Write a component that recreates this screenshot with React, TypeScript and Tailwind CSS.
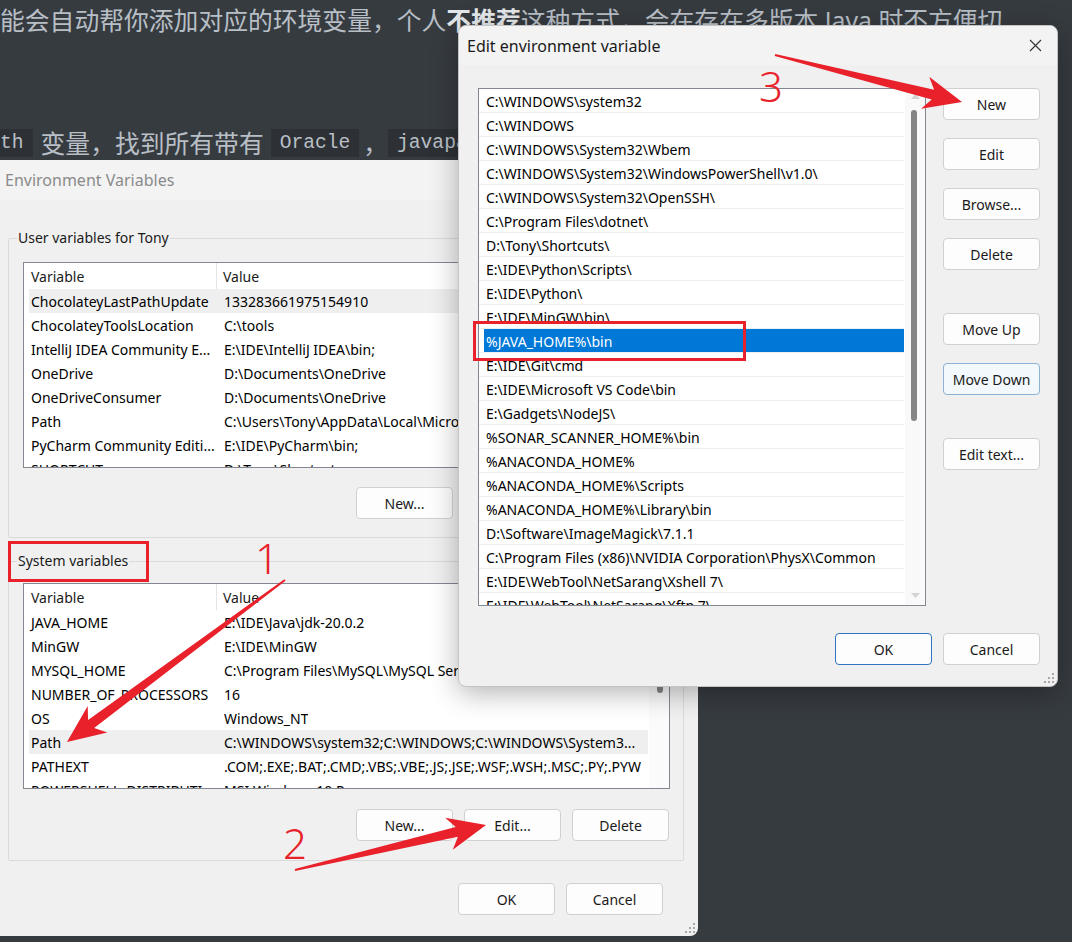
import React from 'react';

type P = [number, number];

// tapered annotation arrow, tail -> tip
function arrowPoints(tail: P, tip: P): string {
  const dx = tip[0] - tail[0];
  const dy = tip[1] - tail[1];
  const len = Math.hypot(dx, dy);
  const ux = dx / len;
  const uy = dy / len;
  const nx = -uy;
  const ny = ux;
  const at = (back: number, side: number): P => [tip[0] - ux * back + nx * side, tip[1] - uy * back + ny * side];
  const pts: P[] = [at(len, 1), at(30, 5), at(38, 16.5), tip, at(38, -16.5), at(30, -5), at(len, -1)];
  return pts.map((p) => `${p[0].toFixed(1)},${p[1].toFixed(1)}`).join(' ');
}

const userVars = [
  ['ChocolateyLastPathUpdate', '133283661975154910'],
  ['ChocolateyToolsLocation', 'C:\\tools'],
  ['IntelliJ IDEA Community E...', 'E:\\IDE\\IntelliJ IDEA\\bin;'],
  ['OneDrive', 'D:\\Documents\\OneDrive'],
  ['OneDriveConsumer', 'D:\\Documents\\OneDrive'],
  ['Path', 'C:\\Users\\Tony\\AppData\\Local\\Microsoft\\WindowsApps;'],
  ['PyCharm Community Editi...', 'E:\\IDE\\PyCharm\\bin;'],
  ['SHORTCUT', 'D:\\Tony\\Shortcuts'],
];

const systemVars = [
  ['JAVA_HOME', 'E:\\IDE\\Java\\jdk-20.0.2'],
  ['MinGW', 'E:\\IDE\\MinGW'],
  ['MYSQL_HOME', 'C:\\Program Files\\MySQL\\MySQL Server 8.0'],
  ['NUMBER_OF_PROCESSORS', '16'],
  ['OS', 'Windows_NT'],
  ['Path', 'C:\\WINDOWS\\system32;C:\\WINDOWS;C:\\WINDOWS\\System3...'],
  ['PATHEXT', '.COM;.EXE;.BAT;.CMD;.VBS;.VBE;.JS;.JSE;.WSF;.WSH;.MSC;.PY;.PYW'],
  ['POWERSHELL_DISTRIBUTI...', 'MSI:Windows 10 Pro'],
];

const pathEntries = [
  'C:\\WINDOWS\\system32',
  'C:\\WINDOWS',
  'C:\\WINDOWS\\System32\\Wbem',
  'C:\\WINDOWS\\System32\\WindowsPowerShell\\v1.0\\',
  'C:\\WINDOWS\\System32\\OpenSSH\\',
  'C:\\Program Files\\dotnet\\',
  'D:\\Tony\\Shortcuts\\',
  'E:\\IDE\\Python\\Scripts\\',
  'E:\\IDE\\Python\\',
  'E:\\IDE\\MinGW\\bin\\',
  '%JAVA_HOME%\\bin',
  'E:\\IDE\\Git\\cmd',
  'E:\\IDE\\Microsoft VS Code\\bin',
  'E:\\Gadgets\\NodeJS\\',
  '%SONAR_SCANNER_HOME%\\bin',
  '%ANACONDA_HOME%',
  '%ANACONDA_HOME%\\Scripts',
  '%ANACONDA_HOME%\\Library\\bin',
  'D:\\Software\\ImageMagick\\7.1.1',
  'C:\\Program Files (x86)\\NVIDIA Corporation\\PhysX\\Common',
  'E:\\IDE\\WebTool\\NetSarang\\Xshell 7\\',
  'E:\\IDE\\WebTool\\NetSarang\\Xftp 7\\',
];

const Btn: React.FC<{ label: string; variant?: 'default' | 'focus' | 'primary' }> = ({ label, variant = 'default' }) => {
  const look =
    variant === 'focus'
      ? 'bg-[#f3f8fc] border-[#8cb2d6]'
      : variant === 'primary'
        ? 'bg-[#fdfdfd] border-[#2f74c0]'
        : 'bg-[#fdfdfd] border-[#d0d0d0]';
  return (
    <div className={`h-[32px] w-[97px] shrink-0 rounded-[4px] border ${look} flex items-center justify-center text-[14px] text-[#1a1a1a]`}>
      {label}
    </div>
  );
};

const Grip = () => (
  <svg width="10" height="10" viewBox="0 0 10 10" className="absolute right-[3px] bottom-[3px]">
    {[[8, 0], [8, 4], [4, 4], [8, 8], [4, 8], [0, 8]].map(([x, y], i) => (
      <rect key={i} x={x} y={y} width="2" height="2" fill="#a8a8a8" />
    ))}
  </svg>
);

const VarTable: React.FC<{ rows: string[][]; selected: number; thumbTop: number }> = ({ rows, selected, thumbTop }) => (
  <div className="relative h-[206px] border border-[#828790] bg-white overflow-hidden">
    <div className="flex h-[26px] items-center text-[14px] text-[#1a1a1a]">
      <div className="w-[193px] h-full pl-[7px] flex items-center border-r border-[#e5e5e5]">Variable</div>
      <div className="pl-[6px]">Value</div>
    </div>
    {rows.map(([k, v], i) => (
      <div
        key={k}
        className={`ml-[5px] mr-[21px] flex h-[24px] items-center text-[14px] text-black whitespace-nowrap ${i === selected ? 'bg-[#efefef]' : ''}`}
      >
        <div className="w-[195px] shrink-0 pl-[2px] overflow-hidden">{k}</div>
        <div className="overflow-hidden">{v}</div>
      </div>
    ))}
    <div className="absolute right-0 top-0 bottom-0 w-[20px] bg-[#fbfbfb]">
      <div className="absolute left-[8px] w-[6px] h-[95px] rounded-[3px] bg-[#858585]" style={{ top: thumbTop }} />
    </div>
  </div>
);

const EnvDialog = () => (
  <div className="absolute left-0 top-[160px] w-[698px] h-[776px] bg-[#f0f0f0] rounded-br-[8px] font-['Noto_Sans',sans-serif]">
    <div className="h-[40px] bg-[#f3f3f3] pl-[5px] flex items-center text-[16px] text-[#8a8a8a]">Environment Variables</div>
    <div className="pl-[8px] pr-[14px]">
      <fieldset className="mt-[28px] border border-[#dadada] rounded-[2px] pl-[14px] pr-[13px] pb-[18px]">
        <legend className="-ml-[6px] px-[1px] text-[14px] leading-[20px] text-[#1a1a1a]">User variables for Tony</legend>
        <div className="mt-[14px]">
          <VarTable rows={userVars} selected={0} thumbTop={2} />
        </div>
        <div className="mt-[19px] flex justify-end gap-[11px] pr-[1px]">
          <Btn label="New..." />
          <Btn label="Edit..." />
          <Btn label="Delete" />
        </div>
      </fieldset>
      <fieldset className="mt-[13px] border border-[#dadada] rounded-[2px] pl-[14px] pr-[13px] pb-[19px]">
        <legend className="-ml-[6px] px-[1px] text-[14px] leading-[20px] text-[#1a1a1a]">System variables</legend>
        <div className="mt-[12px]">
          <VarTable rows={systemVars} selected={5} thumbTop={14} />
        </div>
        <div className="mt-[20px] flex justify-end gap-[11px] pr-[1px]">
          <Btn label="New..." />
          <Btn label="Edit..." />
          <Btn label="Delete" />
        </div>
      </fieldset>
      <div className="mt-[22px] flex justify-end gap-[11px] pr-[21px]">
        <Btn label="OK" />
        <Btn label="Cancel" />
      </div>
    </div>
    <Grip />
  </div>
);

const EditDialog = () => (
  <div className="absolute left-[458px] top-[25px] w-[600px] h-[662px] rounded-[8px] bg-[#f0f0f0] border border-[#c4c4c4] shadow-[0_6px_28px_rgba(0,0,0,0.3)] font-['Noto_Sans',sans-serif]">
    <div className="h-[39px] rounded-t-[8px] bg-[#f3f3f3] flex items-center justify-between pl-[8px] pr-[15px] text-[16px] text-[#1a1a1a]">
      <span>Edit environment variable</span>
      <svg width="13" height="13" viewBox="0 0 13 13">
        <path d="M1 1 L12 12 M12 1 L1 12" stroke="#333" strokeWidth="1.1" />
      </svg>
    </div>
    <div className="mt-[23px] pl-[19px] pr-[17px] flex gap-[17px]">
      <div className="relative w-[448px] h-[518px] border border-[#828790] bg-white overflow-hidden">
        {pathEntries.map((p, i) => (
          <div key={p} className="h-[24px] mr-[21px] border-b border-[#efefef] pl-[1px]">
            <div
              className={`ml-[4px] h-full flex items-center pl-[2px] pt-[1px] text-[14px] whitespace-nowrap ${i === 10 ? 'bg-[#0078d7] text-white' : 'text-black'}`}
            >
              {p}
            </div>
          </div>
        ))}
        <div className="absolute right-0 top-0 bottom-0 w-[20px] bg-[#f9f9f9]">
          <svg width="9" height="5" viewBox="0 0 9 5" className="absolute left-[6px] top-[5px]">
            <path d="M0 5 L4.5 0 L9 5 Z" fill="#d3d3d3" />
          </svg>
          <div className="absolute left-[6px] top-[21px] w-[6px] h-[311px] rounded-[3px] bg-[#858585]" />
          <svg width="9" height="5" viewBox="0 0 9 5" className="absolute left-[6px] bottom-[7px]">
            <path d="M0 0 L4.5 5 L9 0 Z" fill="#d3d3d3" />
          </svg>
        </div>
      </div>
      <div className="flex flex-col">
        <Btn label="New" />
        <div className="mt-[18px]"><Btn label="Edit" /></div>
        <div className="mt-[18px]"><Btn label="Browse..." /></div>
        <div className="mt-[18px]"><Btn label="Delete" /></div>
        <div className="mt-[43px]"><Btn label="Move Up" /></div>
        <div className="mt-[18px]"><Btn label="Move Down" variant="focus" /></div>
        <div className="mt-[43px]"><Btn label="Edit text..." /></div>
      </div>
    </div>
    <div className="mt-[27px] pr-[17px] flex justify-end gap-[11px]">
      <Btn label="OK" variant="primary" />
      <Btn label="Cancel" />
    </div>
    <Grip />
  </div>
);

const Annotations = () => (
  <>
    <svg className="absolute inset-0 pointer-events-none" width="1072" height="942" viewBox="0 0 1072 942">
      <rect x="9.5" y="542.5" width="138" height="38" fill="none" stroke="#e8212b" strokeWidth="3" />
      <rect x="474.5" y="322.5" width="270" height="37" fill="none" stroke="#e8212b" strokeWidth="3" />
      <polygon points={arrowPoints([285, 580], [67, 742])} fill="#e8212b" />
      <polygon points={arrowPoints([295, 870], [486, 825])} fill="#e8212b" />
      <polygon points={arrowPoints([775, 55], [962, 102])} fill="#e8212b" />
    </svg>
    <div className="absolute left-[255px] top-[533px] text-[42px] leading-[50px] font-light text-[#e8212b] font-['Noto_Sans',sans-serif]">1</div>
    <div className="absolute left-[283px] top-[818px] text-[42px] leading-[50px] font-light text-[#e8212b] font-['Noto_Sans',sans-serif]">2</div>
    <div className="absolute left-[759px] top-[61px] text-[42px] leading-[50px] font-light text-[#e8212b] font-['Noto_Sans',sans-serif]">3</div>
  </>
);

export default function App() {
  return (
    <div className="relative w-[1072px] h-[942px] overflow-hidden bg-[#363b40] text-[#b8bfc6] font-['Noto_Sans','Noto_Sans_CJK_SC',sans-serif]">
      {/* markdown page behind the dialogs */}
      <div className="text-[24.8px] whitespace-nowrap">
        <div className="h-[40px] leading-[40px]">
          能会自动帮你添加对应的环境变量，个人<b className="text-[#e6e9ec]">不推荐</b>这种方式，会在存在多版本 Java 时不方便切
        </div>
        <div className="mt-[83px] h-[40px] leading-[40px] flex items-center">
          <code className="h-[28px] leading-[28px] pr-[9px] bg-[#2d3135] text-[19.6px] font-['Liberation_Mono',monospace]">th</code>
          <span className="ml-[8px]">变量，找到所有带有</span>
          <code className="ml-[7px] h-[28px] leading-[28px] px-[9px] bg-[#2d3135] text-[19.6px] font-['Liberation_Mono',monospace]">Oracle</code>
          <span className="ml-[4px]">，</span>
          <code className="h-[28px] leading-[28px] px-[9px] bg-[#2d3135] text-[19.6px] font-['Liberation_Mono',monospace]">javapath</code>
        </div>
      </div>
      <EnvDialog />
      <EditDialog />
      <Annotations />
    </div>
  );
}
